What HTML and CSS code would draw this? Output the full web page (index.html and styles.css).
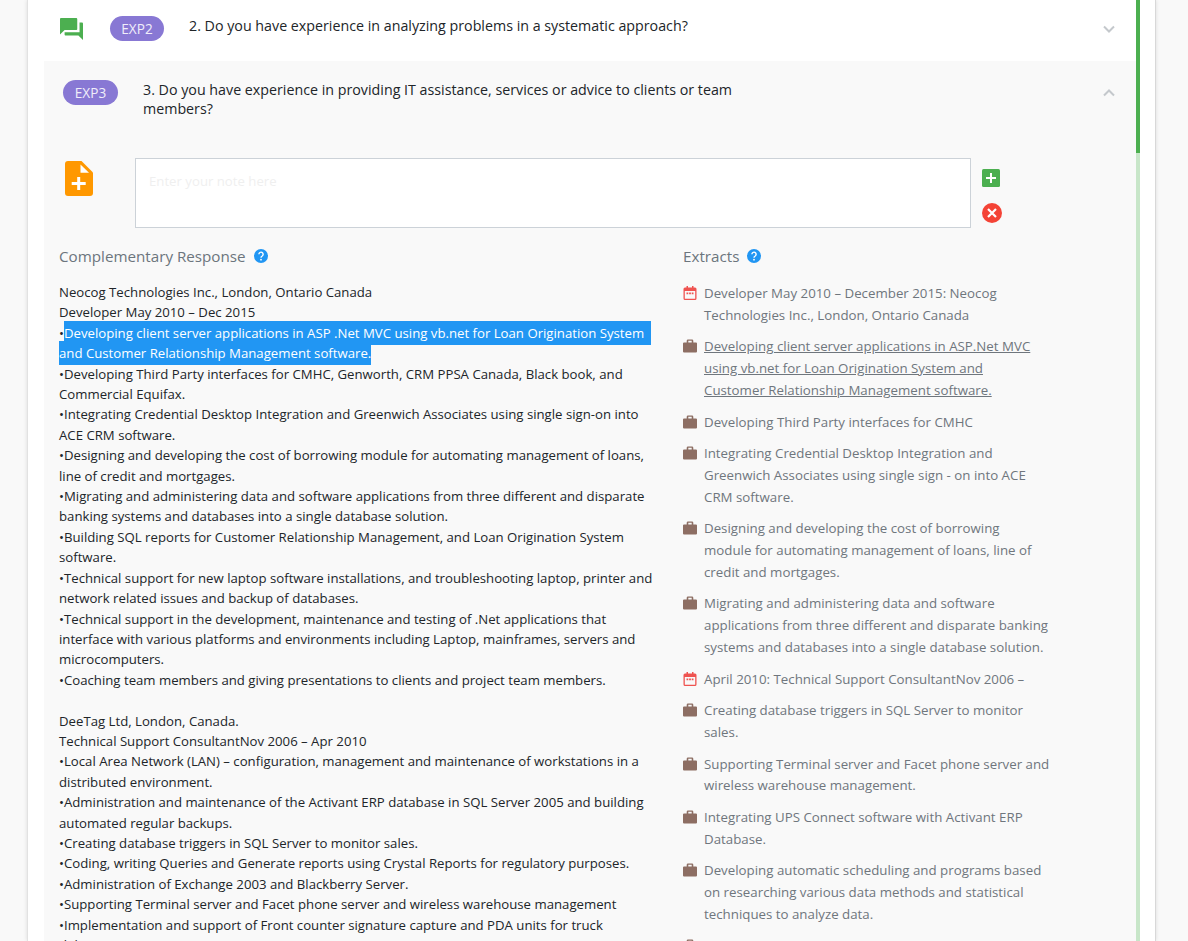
FILE: index.html
```html
<!DOCTYPE html>
<html lang="en">
<head>
<meta charset="utf-8">
<title>Experience questions</title>
<link rel="stylesheet" href="styles.css">
</head>
<body>
<svg class="defs" width="0" height="0" aria-hidden="true">
  <symbol id="case" viewBox="0 0 14 13"><path d="M5 0h4a1.300 1.300 0 0 1 1.300 1.300V3H13a1 1 0 0 1 1 1v8a1 1 0 0 1-1 1H1a1 1 0 0 1-1-1V4a1 1 0 0 1 1-1h2.700V1.300A1.300 1.300 0 0 1 5 0zm.300 1.300V3h3.400V1.300z" fill="#8d6e63" fill-rule="evenodd"/></symbol>
  <symbol id="cal" viewBox="0 0 13 14"><path d="M3 0h1.500v1.500h4V0H10v1.500h1.500A1.500 1.500 0 0 1 13 3v9.500a1.500 1.500 0 0 1-1.500 1.500h-10A1.500 1.500 0 0 1 0 12.500V3a1.500 1.500 0 0 1 1.500-1.500H3zM1.300 5v7.500c0 .1.100.2.200.2h10c.1 0 .2-.1.200-.2V5z" fill="#ef5350" fill-rule="evenodd"/><path d="M3 6.500h1.800v1.800H3zM5.600 6.500h1.800v1.800H5.600zM8.200 6.500H10v1.800H8.200z" fill="#ef5350"/></symbol>
  <symbol id="help" viewBox="0 0 14 14"><circle cx="7" cy="7" r="7" fill="#2196f3"/><path d="M4.900 5.300a2.100 2.100 0 1 1 3.300 1.700c-.8.500-1.200.9-1.200 1.700" fill="none" stroke="#fff" stroke-width="1.400"/><circle cx="7" cy="10.700" r=".9" fill="#fff"/></symbol>
</svg>
<main class="card">
  <div class="content">
    <section class="row-closed">
      <svg class="chat-icon" viewBox="2 2 20 20" preserveAspectRatio="none" aria-hidden="true"><path d="M21 6h-2v9H6v2c0 .55.45 1 1 1h11l4 4V7c0-.55-.45-1-1-1zm-4 6V3c0-.55-.45-1-1-1H3c-.55 0-1 .45-1 1v14l4-4h10c.55 0 1-.45 1-1z" fill="#4caf50"/></svg>
      <span class="badge badge-first">EXP2</span>
      <h2 class="question">2. Do you have experience in analyzing problems in a systematic approach?</h2>
      <svg class="chevron" viewBox="0 0 12 8" aria-hidden="true"><path d="M1 1.500l5 5 5-5" fill="none" stroke="#c4c8cc" stroke-width="2"/></svg>
    </section>
    <section class="panel">
      <header class="panel-head">
        <span class="badge">EXP3</span>
        <h2 class="question question-wrap">3. Do you have experience in providing IT assistance, services or advice to clients or team members?</h2>
        <svg class="chevron" viewBox="0 0 12 8" aria-hidden="true"><path d="M1 6.500l5-5 5 5" fill="none" stroke="#c4c8cc" stroke-width="2"/></svg>
      </header>
      <div class="note">
        <svg class="file-icon" viewBox="0 0 28 35" aria-hidden="true"><path d="M3 0h13.500L28 11.500V32a3 3 0 0 1-3 3H3a3 3 0 0 1-3-3V3a3 3 0 0 1 3-3z" fill="#ff9800"/><path d="M15.500 3.500L24 11.700h-8.500z" fill="#fff"/><path d="M12.200 16h3v5h5.500v3h-5.500v5h-3v-5H6.700v-3h5.500z" fill="#fff"/></svg>
        <div class="note-box">Enter your note here</div>
        <div class="note-actions">
          <svg class="add-icon" viewBox="0 0 18 18" aria-hidden="true"><rect width="18" height="18" rx="1.500" fill="#4caf50"/><path d="M8 4h2v4h4v2h-4v4H8v-4H4V8h4z" fill="#fff"/></svg>
          <svg class="del-icon" viewBox="0 0 20 20" aria-hidden="true"><circle cx="10" cy="10" r="10" fill="#f44336"/><path d="M6 6l8 8M14 6l-8 8" stroke="#fff" stroke-width="2.200"/></svg>
        </div>
      </div>
      <div class="columns">
        <div class="col-left">
          <h3 class="col-title">Complementary Response <svg class="help" aria-hidden="true"><use href="#help"/></svg></h3>
          <div class="response">
            <p>Neocog Technologies Inc., London, Ontario Canada</p>
            <p>Developer May 2010 – Dec 2015</p>
            <p>•<span class="selected">Developing client server applications in ASP .Net MVC using vb.net for Loan Origination System&nbsp;&nbsp;<br>and Customer Relationship Management software.</span></p>
            <p>•Developing Third Party interfaces for CMHC, Genworth, CRM PPSA Canada, Black book, and Commercial Equifax.</p>
            <p>•Integrating Credential Desktop Integration and Greenwich Associates using single sign-on into ACE CRM software.</p>
            <p>•Designing and developing the cost of borrowing module for automating management of loans, line of credit and mortgages.</p>
            <p>•Migrating and administering data and software applications from three different and disparate banking systems and databases into a single database solution.</p>
            <p>•Building SQL reports for Customer Relationship Management, and Loan Origination System software.</p>
            <p>•Technical support for new laptop software installations, and troubleshooting laptop, printer and network related issues and backup of databases.</p>
            <p>•Technical support in the development, maintenance and testing of .Net applications that interface with various platforms and environments including Laptop, mainframes, servers and microcomputers.</p>
            <p>•Coaching team members and giving presentations to clients and project team members.</p>
            <p class="blank">&nbsp;</p>
            <p>DeeTag Ltd, London, Canada.</p>
            <p>Technical Support ConsultantNov 2006 – Apr 2010</p>
            <p>•Local Area Network (LAN) – configuration, management and maintenance of workstations in a distributed environment.</p>
            <p>•Administration and maintenance of the Activant ERP database in SQL Server 2005 and building automated regular backups.</p>
            <p>•Creating database triggers in SQL Server to monitor sales.</p>
            <p>•Coding, writing Queries and Generate reports using Crystal Reports for regulatory purposes.</p>
            <p>•Administration of Exchange 2003 and Blackberry Server.</p>
            <p>•Supporting Terminal server and Facet phone server and wireless warehouse management</p>
            <p>•Implementation and support of Front counter signature capture and PDA units for truck delivery.</p>
          </div>
        </div>
        <div class="col-right">
          <h3 class="col-title">Extracts <svg class="help" aria-hidden="true"><use href="#help"/></svg></h3>
          <ul class="extracts">
            <li><svg class="ico" aria-hidden="true"><use href="#cal"/></svg><span>Developer May 2010 – December 2015: Neocog Technologies Inc., London, Ontario Canada</span></li>
            <li><svg class="ico" aria-hidden="true"><use href="#case"/></svg><span class="linked">Developing client server applications in ASP.Net MVC using vb.net for Loan Origination System and<br>Customer Relationship Management software.</span></li>
            <li><svg class="ico" aria-hidden="true"><use href="#case"/></svg><span>Developing Third Party interfaces for CMHC</span></li>
            <li><svg class="ico" aria-hidden="true"><use href="#case"/></svg><span>Integrating Credential Desktop Integration and Greenwich Associates using single sign - on into ACE CRM software.</span></li>
            <li><svg class="ico" aria-hidden="true"><use href="#case"/></svg><span>Designing and developing the cost of borrowing module for automating management of loans, line of credit and mortgages.</span></li>
            <li><svg class="ico" aria-hidden="true"><use href="#case"/></svg><span>Migrating and administering data and software applications from three different and disparate banking systems and databases into a single database solution.</span></li>
            <li><svg class="ico" aria-hidden="true"><use href="#cal"/></svg><span>April 2010: Technical Support ConsultantNov 2006 –</span></li>
            <li><svg class="ico" aria-hidden="true"><use href="#case"/></svg><span>Creating database triggers in SQL Server to monitor sales.</span></li>
            <li><svg class="ico" aria-hidden="true"><use href="#case"/></svg><span>Supporting Terminal server and Facet phone server and wireless warehouse management.</span></li>
            <li><svg class="ico" aria-hidden="true"><use href="#case"/></svg><span>Integrating UPS Connect software with Activant ERP Database.</span></li>
            <li><svg class="ico" aria-hidden="true"><use href="#case"/></svg><span>Developing automatic scheduling and programs based on researching various data methods and statistical techniques to analyze data.</span></li>
            <li><svg class="ico" aria-hidden="true"><use href="#case"/></svg><span>&nbsp;</span></li>
          </ul>
        </div>
      </div>
    </section>
  </div>
  <div class="track"><div class="thumb"></div></div>
</main>
</body>
</html>
```
FILE: styles.css
```css
* { box-sizing: border-box; }
html, body { height: 941px; overflow: hidden; }
body { margin: 0; background: #f9f9f9; font-family: "Open Sans", "Noto Sans", sans-serif; font-size: 13.2px; color: #212529; }
.defs { display: block; height: 0; }
.card { display: flex; width: 1129px; height: 941px; margin-left: 27px; padding-left: 16px; padding-right: 15px; background: #fff; border-left: 1px solid #e2e2e2; border-right: 1px solid #d8d8d8; box-shadow: 0 0 4px rgba(0,0,0,.12); overflow: hidden; }
.content { flex: 1; min-width: 0; }
.track { flex: none; width: 4px; background: #c8e6c9; }
.thumb { height: 153px; background: #4caf50; }
.row-closed { display: flex; align-items: flex-start; height: 61px; padding: 16px 21px 0 16px; }
.chat-icon { width: 23px; height: 22px; margin: 2px 27px 0 0; flex: none; }
.badge { flex: none; display: inline-block; width: 55px; height: 25px; line-height: 25px; border-radius: 13px; background: #8878d4; color: #f0eefa; font-size: 13.6px; text-align: center; }
.badge-first { width: 54px; margin-right: 25px; }
.question { margin: 0; font-size: 14.25px; font-weight: 400; line-height: 19px; color: #212529; }
.row-closed .question { flex: 1; }
.question-wrap { width: 610px; margin-left: 25px; }
.chevron { flex: none; width: 12px; height: 8px; margin-top: 9px; margin-left: auto; }
.panel { background: #f9f9f9; padding: 0 0 0 15px; }
.panel-head { display: flex; align-items: flex-start; padding: 19px 21px 0 4px; height: 97px; }
.note { display: flex; align-items: flex-start; }
.file-icon { flex: none; width: 28px; height: 35px; margin: 3px 42px 0 6px; }
.note-box { flex: none; width: 836px; height: 70px; padding: 13px 13px; background: #fff; border: 1px solid #ccd2d8; color: #efefef; font-size: 13.2px; line-height: 19px; }
.note-actions { display: flex; flex-direction: column; align-items: flex-start; margin-left: 11px; padding-top: 11px; }
.add-icon { width: 18px; height: 18px; }
.del-icon { width: 20px; height: 20px; margin-top: 16px; }
.columns { display: flex; padding-top: 17px; }
.col-left { flex: none; width: 624px; }
.col-right { flex: none; width: 400px; }
.col-title { display: flex; align-items: center; gap: 8px; margin: 0; height: 22px; font-size: 15.2px; font-weight: 400; color: #6c757d; }
.help { width: 14px; height: 14px; }
.response { width: 596px; margin-top: 15px; line-height: 20.4px; color: #212529; }
.response p { margin: 0; }
.selected { background: #2196f3; color: #fff; padding: 3px 0; }
.extracts { list-style: none; width: 367px; margin: 16px 0 0; padding: 0; color: #6f767d; font-size: 13.3px; line-height: 21.7px; }
.extracts li { display: flex; align-items: flex-start; margin-bottom: 10px; }
.ico { flex: none; width: 14px; height: 14px; margin: 3px 7px 0 0; }
.linked { text-decoration: underline; }
```
